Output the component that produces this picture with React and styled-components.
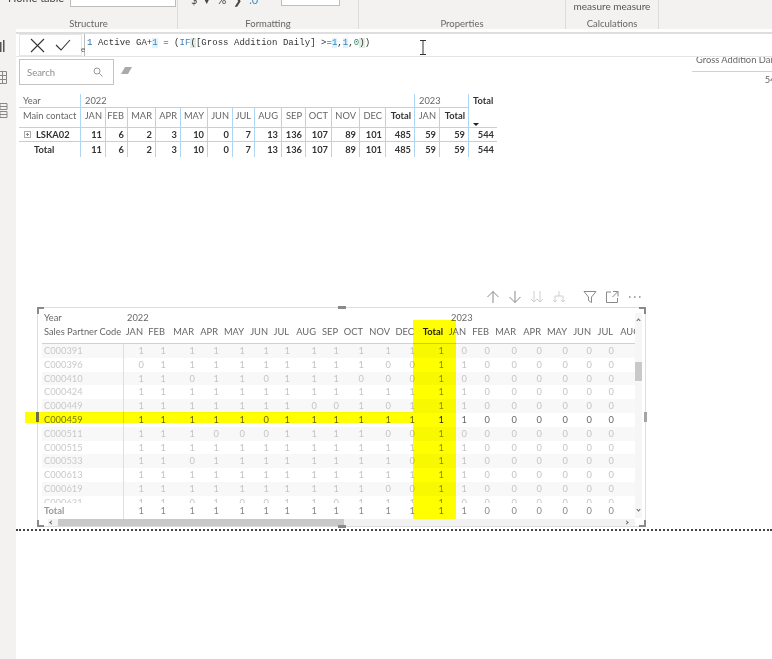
import React from 'react'
import styled, { createGlobalStyle, css } from 'styled-components'

const GlobalStyle = createGlobalStyle`
  html, body {
    margin: 0;
    padding: 0;
    background: #fff;
  }
  * {
    box-sizing: border-box;
  }
`

const uiFont = `Lato, "Open Sans", Arial, sans-serif`
const blueLine = '#aed6f3'

const Page = styled.div`
  width: 772px;
  height: 659px;
  overflow: hidden;
  position: relative;
  background: #fff;
  font-family: ${uiFont};
  font-size: 9.3px;
  color: #555;
  filter: blur(0.4px);
`

/* ribbon */
const Ribbon = styled.div`
  display: flex;
  height: 29px;
  background: #f3f2f1;
  overflow: hidden;
`
const Group = styled.div`
  width: ${(p) => p.$width}px;
  flex: none;
  height: 29px;
  border-right: ${(p) => (p.$last ? 'none' : '1px solid #dcdcdc')};
  display: flex;
  flex-direction: column;
  align-items: center;
`
const GroupBody = styled.div`
  height: 18px;
  flex: none;
  width: 100%;
  display: flex;
  align-items: flex-end;
  padding-left: ${(p) => p.$pad || 0}px;
`
const GroupLabel = styled.div`
  font-size: 9.5px;
  color: #666;
  line-height: 11px;
`
const ClippedRow = styled.div`
  display: flex;
  align-items: center;
  gap: 6px;
  margin-bottom: ${(p) => p.$lift}px;
  color: #444;
  font-size: 11px;
  white-space: nowrap;
`
const Glyphs = styled.div`
  align-self: flex-end;
  display: flex;
  gap: 7px;
  width: 84px;
  line-height: 14px;
  margin-bottom: -1px;
  font-size: 11px;
  color: #444;
`
const BlueGlyph = styled.span`
  color: #3a8fc7;
`
const RibbonSelect = styled.div`
  width: ${(p) => p.$width}px;
  height: 20px;
  background: #fff;
  border: 1px solid #bdbdbd;
  padding: 0 4px;
  font-size: 11px;
  color: #666;
  display: flex;
  justify-content: space-between;
  align-items: flex-start;
  line-height: 13px;
`
const MeasureText = styled.div`
  width: 100%;
  text-align: center;
  font-size: 10px;
  color: #555;
  line-height: 14px;
  margin-bottom: 5px;
`
const TopStrip = styled.div`
  height: 5px;
  border-bottom: 2px solid #dedede;
`

/* body */
const Body = styled.div`
  display: flex;
  height: 625px;
`
const Sidebar = styled.div`
  width: 16px;
  flex: none;
  background: #f3f2f1;
  display: flex;
  flex-direction: column;
  align-items: flex-start;
  padding-top: 11px;
  margin-top: -5px;
  position: relative;
`
const SideIcon = styled.svg`
  display: block;
  width: 8px;
  height: ${(p) => p.$h}px;
  margin-top: ${(p) => p.$top || 0}px;
`
const Canvas = styled.div`
  flex: 1;
  min-width: 0;
`

/* formula bar */
const FormulaRow = styled.div`
  display: flex;
  height: 23px;
  align-items: stretch;
  padding-left: 3px;
  border-bottom: 1px solid #e4e4e4;
  position: relative;
`
const FormulaButtons = styled.div`
  width: 63px;
  border: 1px solid #e6e6e6;
  display: flex;
  align-items: center;
  justify-content: space-around;
  padding: 0 5px;
`
const FormulaInput = styled.div`
  margin-left: 2px;
  flex: 1;
  border-left: 1px solid #bbb;
  font-family: "Liberation Mono", monospace;
  font-size: 9px;
  letter-spacing: 0.04px;
  line-height: 18px;
  color: #333;
  white-space: pre;
  padding-left: 2px;
`
const LineNo = styled.span`
  color: #2b6fb0;
`
const Num = styled.span`
  background: #e3f1fb;
  color: #2d8ac7;
`
const Keyword = styled.span`
  color: #3f7fc0;
`
const Paren = styled.span`
  background: #e3ede3;
`
const Zero = styled.span`
  color: #2d8a6b;
`
const TextCursor = styled.svg`
  position: absolute;
  left: 403px;
  top: 6px;
`
const StrayLetter = styled.span`
  position: absolute;
  left: 65px;
  top: 10px;
  font-size: 8px;
  color: #555;
`

/* upper visuals */
const SearchRow = styled.div`
  display: flex;
  align-items: flex-start;
  padding-left: 3px;
  margin-top: 2px;
  height: 26px;
`
const SearchBox = styled.div`
  width: 95px;
  height: 26px;
  border: 1px solid #c4c4c4;
  display: flex;
  align-items: center;
  justify-content: space-between;
  padding: 0 10px 0 7px;
  color: #8d8d8d;
  font-size: 9.5px;
`
const Eraser = styled.svg`
  margin: 8px 0 0 7px;
`
const MiniCard = styled.div`
  margin-left: auto;
  width: 80px;
  overflow: hidden;
  margin-top: -2px;
  white-space: nowrap;
`
const MiniTitle = styled.div`
  height: 15px;
  line-height: 5px;
  padding-left: 4px;
  color: #666;
  border-bottom: 1px solid #b5daf5;
`
const MiniValue = styled.div`
  text-align: right;
  margin-right: -9px;
  line-height: 15px;
  color: #666;
`

const ContactGrid = styled.div`
  display: grid;
  margin: 9px 0 0 3px;
  width: 478px;
  grid-template-columns: 61px 25px 22px 28px 25px 27px 25px 22px 27px 24px 26px 28px 26px 29px 25px 29px 29px;
  grid-template-rows: 14px 20px 14px 15px;
`
const ContactCell = styled.div`
  grid-column: span ${(p) => p.$span || 1};
  grid-row: span ${(p) => p.$rows || 1};
  display: flex;
  align-items: center;
  justify-content: ${(p) => (p.$left ? 'flex-start' : 'flex-end')};
  padding: 0 ${(p) => (p.$left ? 0 : 3)}px ${(p) => p.$lift || 0}px ${(p) => (p.$left ? 4 : 0)}px;
  white-space: nowrap;
  color: ${(p) => (p.$strong ? '#333' : '#666')};
  font-weight: ${(p) => (p.$strong ? 700 : 400)};
  border-left: ${(p) => (p.$sep ? `1px solid ${blueLine}` : 'none')};
  border-bottom: ${(p) => (p.$noline ? 'none' : `1px solid ${blueLine}`)};
  position: relative;
`
const ExpandBox = styled.span`
  width: 7px;
  height: 7px;
  border: 1px solid #aaa;
  margin: 0 5px 0 1px;
  position: relative;
  flex: none;
  &::after {
    content: '';
    position: absolute;
    left: 1px;
    right: 1px;
    top: 2px;
    height: 1px;
    background: #888;
  }
  &::before {
    content: '';
    position: absolute;
    top: 1px;
    bottom: 1px;
    left: 2px;
    width: 1px;
    background: #888;
  }
`
const TotalIndent = styled.span`
  padding-left: 11px;
`
const SortArrow = styled.span`
  position: absolute;
  left: 4px;
  bottom: 1px;
  width: 0;
  height: 0;
  border-left: 3px solid transparent;
  border-right: 3px solid transparent;
  border-top: 3px solid #222;
`

/* lower visual */
const PageArea = styled.div`
  height: 472px;
  border-bottom: 2px dotted #444;
`
const VisualWrap = styled.div`
  margin: 133px 0 0 21px;
  width: 609px;
`
const VisualToolbar = styled.div`
  height: 17px;
  display: flex;
  justify-content: flex-end;
  align-items: center;
  padding: 0 5px 3px 0;
  gap: 8px;
`
const ToolIcon = styled.svg`
  display: block;
  color: ${(p) => (p.$faint ? '#cfcfcf' : '#8a8a8a')};
  margin-left: ${(p) => p.$push || 0}px;
`
const Frame = styled.div`
  position: relative;
  width: 609px;
  height: 220px;
  border: 1px solid #dedede;
  padding: 3px 0 0 4px;
`
const Viewport = styled.div`
  width: 594px;
  overflow: hidden;
`
const rowColumns = css`
  display: grid;
  grid-template-columns: 82px 21px 22px 29px 24px 26px 24px 21px 27px 22px 25px 27px 24px 29px 23px 23px 27px 25px 26px 24px 22px 27px;
  width: 620px;
`
const HeadRow = styled.div`
  ${rowColumns}
  height: ${(p) => p.$h}px;
  padding-bottom: ${(p) => p.$pb || 0}px;
  border-bottom: ${(p) => (p.$line ? '1px solid #b8d9f2' : 'none')};
  color: #666;
  line-height: 14px;
`
const HeadCell = styled.div`
  white-space: nowrap;
  text-align: ${(p) => (p.$left ? 'left' : 'right')};
  padding: ${(p) => (p.$left ? `0 0 0 ${p.$pad || 2}px` : '0 2px 0 0')};
  grid-column: ${(p) => p.$col || 'auto'};
  font-weight: ${(p) => (p.$bold ? 700 : 400)};
  color: ${(p) => (p.$bold ? '#222' : 'inherit')};
`
const ScrollBody = styled.div`
  height: 159px;
  overflow: hidden;
`
const DataRow = styled.div`
  ${rowColumns}
  height: ${(p) => (p.$total ? 16 : 13.8)}px;
  line-height: ${(p) => (p.$total ? 15 : 13.8)}px;
  background: ${(p) => (p.$band ? '#f8f8f8' : 'transparent')};
  color: ${(p) => p.$tone};
`
const RowLabel = styled.div`
  padding-left: 2px;
  border-right: 1px solid #cfe3f5;
  font-weight: ${(p) => (p.$bold ? 700 : 400)};
  color: ${(p) => p.$color || 'inherit'};
`
const RowValue = styled.div`
  text-align: right;
  padding-right: 1px;
  color: ${(p) => p.$color || 'inherit'};
`
const HScroll = styled.div`
  position: absolute;
  left: 10px;
  top: 211px;
  width: 587px;
  height: 7px;
  background: #f2f2f2;
`
const HThumb = styled.div`
  position: absolute;
  left: 10px;
  top: 0;
  width: 286px;
  height: 7px;
  background: #c9c9c9;
`
const VScroll = styled.div`
  position: absolute;
  left: 597px;
  top: 5px;
  width: 7px;
  height: 205px;
  background: #f6f6f6;
`
const VThumb = styled.div`
  position: absolute;
  left: 0;
  top: 49px;
  width: 7px;
  height: 19px;
  background: #c9c9c9;
`
const ScrollArrow = styled.span`
  position: absolute;
  left: ${(p) => p.$x}px;
  top: ${(p) => p.$y}px;
  width: 3px;
  height: 3px;
  border-left: 1px solid #666;
  border-top: 1px solid #666;
  transform: rotate(${(p) => p.$deg}deg);
`
const Highlight = styled.div`
  position: absolute;
  left: ${(p) => p.$x}px;
  top: ${(p) => p.$y}px;
  width: ${(p) => p.$w}px;
  height: ${(p) => p.$h}px;
  background: #ffff00;
  mix-blend-mode: multiply;
`
const Corner = styled.span`
  position: absolute;
  width: 7px;
  height: 7px;
  ${(p) => (p.$top ? 'top: -1px;' : 'bottom: -1px;')}
  ${(p) => (p.$right ? 'right: -1px;' : 'left: -1px;')}
  border-color: #8a8a8a;
  border-style: solid;
  border-width: ${(p) => (p.$top ? '2px' : '0')} ${(p) => (p.$right ? '2px' : '0')} ${(p) => (p.$top ? '0' : '2px')} ${(p) => (p.$right ? '0' : '2px')};
`
const HandleH = styled.span`
  position: absolute;
  left: 300px;
  width: 8px;
  height: 3px;
  background: #8a8a8a;
  ${(p) => (p.$top ? 'top: -2px;' : 'bottom: -2px;')}
`
const HandleV = styled.span`
  position: absolute;
  top: 104px;
  width: 3px;
  height: 10px;
  background: ${(p) => (p.$right ? '#a5a5a5' : '#6f6f40')};
  ${(p) => (p.$right ? 'right: -2px;' : 'left: -2px;')}
`

const contactMonths = ['JAN', 'FEB', 'MAR', 'APR', 'MAY', 'JUN', 'JUL', 'AUG', 'SEP', 'OCT', 'NOV', 'DEC']
const contactValues = [11, 6, 2, 3, 10, 0, 7, 13, 136, 107, 89, 101, 485, 59, 59, 544]

const partnerHeads = [...contactMonths, 'Total', 'JAN', 'FEB', 'MAR', 'APR', 'MAY', 'JUN', 'JUL', 'AUG']

const partners = [
  ['C000391', '111111111111', '1', '0000000'],
  ['C000396', '011111111100', '1', '1000000'],
  ['C000410', '110110111000', '1', '0000000'],
  ['C000424', '111111111111', '1', '1000000'],
  ['C000449', '111111100101', '1', '1000000'],
  ['C000459', '111110111111', '1', '1000000'],
  ['C000511', '111000111100', '1', '0000000'],
  ['C000515', '111111111111', '1', '1000000'],
  ['C000533', '110111111110', '1', '1000000'],
  ['C000613', '111111111111', '1', '1000000'],
  ['C000619', '111111111100', '1', '1000000'],
  ['C000631', '110100110111', '1', '0000000'],
]

function PartnerRow({ row, index }) {
  const [code, months, total, next] = row
  const active = code === 'C000459'
  const values = (months + total + next).split('')
  return (
    <DataRow $band={index % 2 === 0} $tone={active ? '#666' : '#c4c4c4'}>
      <RowLabel $color={active ? '#777' : '#c9c9c9'}>{code}</RowLabel>
      {values.map((v, i) => (
        <RowValue key={i} $color={i === 12 ? (active ? '#222' : '#8a8a6a') : undefined}>{v}</RowValue>
      ))}
    </DataRow>
  )
}

function Tool({ faint, push, children }) {
  return (
    <ToolIcon $faint={faint} $push={push} width="14" height="14" viewBox="0 0 14 14" fill="none" stroke="currentColor" strokeWidth="1">
      {children}
    </ToolIcon>
  )
}

export default function App() {
  return (
    <Page>
      <GlobalStyle />
      <Ribbon>
        <Group $width={178}>
          <GroupBody $pad={8}>
            <ClippedRow $lift={11}>
              <span>Home table</span>
              <RibbonSelect $width={106}>Sales Partner<span>⌄</span></RibbonSelect>
            </ClippedRow>
          </GroupBody>
          <GroupLabel>Structure</GroupLabel>
        </Group>
        <Group $width={181}>
          <GroupBody $pad={13}>
            <ClippedRow $lift={12}>
              <Glyphs>
                <span>$</span><span>▾</span><span>%</span><span>❯</span><BlueGlyph>.0</BlueGlyph>
              </Glyphs>
              <RibbonSelect $width={59}>-<span>⌄</span></RibbonSelect>
            </ClippedRow>
          </GroupBody>
          <GroupLabel>Formatting</GroupLabel>
        </Group>
        <Group $width={207}>
          <GroupBody />
          <GroupLabel>Properties</GroupLabel>
        </Group>
        <Group $width={93}>
          <GroupBody>
            <MeasureText>measure measure</MeasureText>
          </GroupBody>
          <GroupLabel>Calculations</GroupLabel>
        </Group>
        <Group $width={113} $last />
      </Ribbon>
      <TopStrip />
      <Body>
        <Sidebar>
          <SideIcon $h={12} viewBox="0 0 8 12">
            <path d="M0 2h1.5v10H0zM3 0h1.5v12H3z" fill="#555" />
          </SideIcon>
          <SideIcon $h={13} $top={19} viewBox="0 0 8 13" fill="none" stroke="#888">
            <path d="M-1 .5h7.5v12H-1M-1 4.5h7.5M-1 8.5h7.5M2.5 0v13" />
          </SideIcon>
          <SideIcon $h={15} $top={19} viewBox="0 0 8 15" fill="none" stroke="#888">
            <path d="M0 .5h7v6H0zM0 8.5h7v6H0zM0 3.5h7M0 11.5h7" />
          </SideIcon>
        </Sidebar>
        <Canvas>
          <FormulaRow>
            <FormulaButtons>
              <svg width="15" height="15" viewBox="0 0 15 15" fill="none" stroke="#333" strokeWidth="1.1">
                <path d="M1 1l13 13M14 1L1 14" />
              </svg>
              <svg width="16" height="12" viewBox="0 0 16 12" fill="none" stroke="#333" strokeWidth="1.1">
                <path d="M1 6l5 5L15 1" />
              </svg>
            </FormulaButtons>
            <StrayLetter>e</StrayLetter>
            <FormulaInput>
              <LineNo>1</LineNo>{' Active GA+'}<Num>1</Num>{' = ('}<Keyword>IF</Keyword><Paren>(</Paren>{'[Gross Addition Daily] >='}<Num>1</Num>,<Num>1</Num>,<Zero>0</Zero><Paren>)</Paren>{')'}
            </FormulaInput>
            <TextCursor width="8" height="15" viewBox="0 0 8 15" fill="none" stroke="#333">
              <path d="M1 .5h6M4 .5v14M1 14.5h6" />
            </TextCursor>
          </FormulaRow>
          <PageArea>
            <SearchRow>
              <SearchBox>
                Search
                <svg width="10" height="10" viewBox="0 0 10 10" fill="none" stroke="#999">
                  <circle cx="4" cy="4" r="3" />
                  <path d="M6.3 6.3L9.5 9.5" />
                </svg>
              </SearchBox>
              <Eraser width="11" height="8" viewBox="0 0 11 8">
                <path d="M4 0h7L7 7H0z" fill="#aaa" />
              </Eraser>
              <MiniCard>
                <MiniTitle>Gross Addition Daily</MiniTitle>
                <MiniValue>544</MiniValue>
              </MiniCard>
            </SearchRow>
            <ContactGrid>
              <ContactCell $left>Year</ContactCell>
              <ContactCell $left $sep $span={13}>2022</ContactCell>
              <ContactCell $left $sep $span={2}>2023</ContactCell>
              <ContactCell $left $sep $strong $noline $lift={1}>Total</ContactCell>
              <ContactCell $left $lift={4}>Main contact</ContactCell>
              {contactMonths.map((m) => (
                <ContactCell key={m} $sep $lift={4}>{m}</ContactCell>
              ))}
              <ContactCell $sep $strong $lift={4}>Total</ContactCell>
              <ContactCell $sep $lift={4}>JAN</ContactCell>
              <ContactCell $sep $strong $lift={4}>Total</ContactCell>
              <ContactCell $sep><SortArrow /></ContactCell>
              <ContactCell $left $strong><ExpandBox />LSKA02</ContactCell>
              {contactValues.map((v, i) => (
                <ContactCell key={i} $sep $strong>{v}</ContactCell>
              ))}
              <ContactCell $left $strong $noline><TotalIndent>Total</TotalIndent></ContactCell>
              {contactValues.map((v, i) => (
                <ContactCell key={i} $sep $strong $noline>{v}</ContactCell>
              ))}
            </ContactGrid>
            <VisualWrap>
              <VisualToolbar>
                <Tool><path d="M7 13V1.5M1.5 7L7 1.5 12.5 7" /></Tool>
                <Tool><path d="M7 1v11.5M1.5 7L7 12.5 12.5 7" /></Tool>
                <Tool faint><path d="M4 1v11M1 9l3 3 3-3M10 1v11M7 9l3 3 3-3" /></Tool>
                <Tool faint><path d="M7 1v5M3 6h8M3 6v6M11 6v6M1 10l2 2 2-2M9 10l2 2 2-2" /></Tool>
                <Tool push={9}><path d="M1 1.5h12L8.5 7v5.5l-3-2V7z" /></Tool>
                <Tool><path d="M6 2H1.5v10.5h11V8M8 1.5h5v5M13 1.5L7.5 7" /></Tool>
                <Tool><path d="M2 7h1.5M7 7h1.5M12 7h1.5" strokeWidth="1.4" /></Tool>
              </VisualToolbar>
              <Frame>
                <Viewport>
                  <HeadRow $h={14}>
                    <HeadCell $left>Year</HeadCell>
                    <HeadCell $left $pad={3} $col="span 13">2022</HeadCell>
                    <HeadCell $left $pad={6} $col="span 8">2023</HeadCell>
                  </HeadRow>
                  <HeadRow $h={19} $pb={4} $line>
                    <HeadCell $left>Sales Partner Code</HeadCell>
                    {partnerHeads.map((h, i) => (
                      <HeadCell key={i} $bold={h === 'Total'}>{h}</HeadCell>
                    ))}
                  </HeadRow>
                  <ScrollBody>
                    {partners.map((row, i) => (
                      <PartnerRow key={row[0]} row={row} index={i} />
                    ))}
                  </ScrollBody>
                  <DataRow $total $tone="#888">
                    <RowLabel $bold $color="#999">Total</RowLabel>
                    {'1111111111111'.split('').map((v, i) => (
                      <RowValue key={i} $color={i === 12 ? '#777' : undefined}>{v}</RowValue>
                    ))}
                    {'1000000'.split('').map((v, i) => (
                      <RowValue key={i}>{v}</RowValue>
                    ))}
                  </DataRow>
                </Viewport>
                <VScroll>
                  <VThumb />
                  <ScrollArrow $x={2} $y={6} $deg={45} />
                  <ScrollArrow $x={2} $y={195} $deg={225} />
                </VScroll>
                <HScroll>
                  <HThumb />
                  <ScrollArrow $x={2} $y={2} $deg={-45} />
                  <ScrollArrow $x={577} $y={2} $deg={135} />
                </HScroll>
                <Highlight $x={375} $y={12} $w={43} $h={199} />
                <Highlight $x={-13} $y={104} $w={388} $h={11} />
                <Corner $top />
                <Corner $top $right />
                <Corner />
                <Corner $right />
                <HandleH $top />
                <HandleH />
                <HandleV />
                <HandleV $right />
              </Frame>
            </VisualWrap>
          </PageArea>
        </Canvas>
      </Body>
    </Page>
  )
}
